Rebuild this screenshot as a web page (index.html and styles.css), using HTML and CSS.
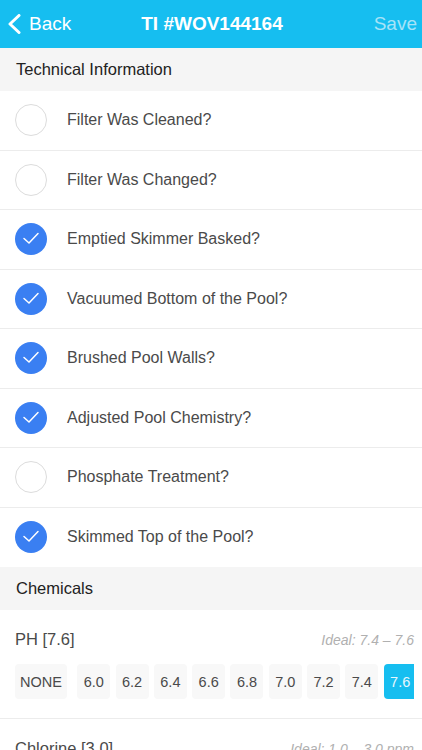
FILE: index.html
```html
<!DOCTYPE html>
<html>
  <head>
    <title>TI #WOV144164</title>
    <link rel="stylesheet" href="styles.css">
  </head>
  <body>
    <header class="nav">
      <a class="nav-back">
        <svg width="14" height="20" viewBox="0 0 14 20"><polyline points="12,1.5 3,10 12,18.5" fill="none" stroke="#fff" stroke-width="3" stroke-linecap="round" stroke-linejoin="round"/></svg>
        <span>Back</span>
      </a>
      <h1 class="nav-title">TI #WOV144164</h1>
      <a class="nav-save">Save</a>
    </header>

    <main>
      <div class="section-header">Technical Information</div>
      <ul class="checklist">
        <li class="check-row"><span class="check"></span>Filter Was Cleaned?</li>
        <li class="check-row"><span class="check"></span>Filter Was Changed?</li>
        <li class="check-row"><span class="check on"><svg width="32" height="32" viewBox="0 0 32 32"><polyline points="9,15.5 14,20 23,10.5" fill="none" stroke="#fff" stroke-width="1.5" stroke-linecap="round" stroke-linejoin="round"/></svg></span>Emptied Skimmer Basked?</li>
        <li class="check-row"><span class="check on"><svg width="32" height="32" viewBox="0 0 32 32"><polyline points="9,15.5 14,20 23,10.5" fill="none" stroke="#fff" stroke-width="1.5" stroke-linecap="round" stroke-linejoin="round"/></svg></span>Vacuumed Bottom of the Pool?</li>
        <li class="check-row"><span class="check on"><svg width="32" height="32" viewBox="0 0 32 32"><polyline points="9,15.5 14,20 23,10.5" fill="none" stroke="#fff" stroke-width="1.5" stroke-linecap="round" stroke-linejoin="round"/></svg></span>Brushed Pool Walls?</li>
        <li class="check-row"><span class="check on"><svg width="32" height="32" viewBox="0 0 32 32"><polyline points="9,15.5 14,20 23,10.5" fill="none" stroke="#fff" stroke-width="1.5" stroke-linecap="round" stroke-linejoin="round"/></svg></span>Adjusted Pool Chemistry?</li>
        <li class="check-row"><span class="check"></span>Phosphate Treatment?</li>
        <li class="check-row"><span class="check on"><svg width="32" height="32" viewBox="0 0 32 32"><polyline points="9,15.5 14,20 23,10.5" fill="none" stroke="#fff" stroke-width="1.5" stroke-linecap="round" stroke-linejoin="round"/></svg></span>Skimmed Top of the Pool?</li>
      </ul>

      <div class="section-header">Chemicals</div>
      <div class="chem">
        <div class="chem-top">
          <span class="chem-name">PH [7.6]</span>
          <span class="chem-ideal">Ideal: 7.4 – 7.6</span>
        </div>
        <div class="chem-values">
          <span class="val none">NONE</span>
          <span class="val">6.0</span>
          <span class="val">6.2</span>
          <span class="val">6.4</span>
          <span class="val">6.6</span>
          <span class="val">6.8</span>
          <span class="val">7.0</span>
          <span class="val">7.2</span>
          <span class="val">7.4</span>
          <span class="val selected">7.6</span>
        </div>
      </div>
      <div class="chem">
        <div class="chem-top">
          <span class="chem-name">Chlorine [3.0]</span>
          <span class="chem-ideal">Ideal: 1.0 – 3.0 ppm</span>
        </div>
        <div class="chem-values">
          <span class="val none">NONE</span>
          <span class="val">0.5</span>
          <span class="val">1.0</span>
          <span class="val">1.5</span>
          <span class="val">2.0</span>
          <span class="val">2.5</span>
          <span class="val selected">3.0</span>
        </div>
      </div>
    </main>
  </body>
</html>
```

FILE: styles.css
```css
* {
  box-sizing: border-box;
}
body {
  margin: 0;
  background-color: #fff;
  font-family: "Liberation Sans", Arial, sans-serif;
  color: #4a4a4a;
}
.nav {
  height: 48px;
  display: grid;
  grid-template-columns: 1fr auto 1fr;
  align-items: center;
  padding: 0 5px 0 7px;
  background-color: #16bef0;
  color: #fff;
}
.nav-back {
  display: flex;
  align-items: center;
  gap: 8px;
  font-size: 19px;
}
.nav-back svg {
  display: block;
}
.nav-title {
  margin: 0;
  font-size: 19px;
  font-weight: bold;
}
.nav-save {
  justify-self: end;
  font-size: 19px;
  color: #a6e3f8;
}
.section-header {
  height: 43px;
  display: flex;
  align-items: center;
  padding-left: 16px;
  background-color: #f5f5f5;
  color: #222;
  font-size: 16.5px;
}
.checklist {
  list-style: none;
  margin: 0;
  padding: 0;
}
.check-row {
  height: 59.5px;
  display: flex;
  align-items: center;
  gap: 20px;
  padding-left: 15px;
  border-bottom: 1px solid #ececec;
  font-size: 16px;
}
.check-row:last-child {
  border-bottom: none;
}
.check {
  width: 32px;
  height: 32px;
  flex-shrink: 0;
  border: 1px solid #dcdcdc;
  border-radius: 50%;
}
.check.on {
  border: none;
  background-color: #3a7ff2;
}
.check svg {
  display: block;
}
.chem {
  padding: 20px 8px 19px 15px;
  border-bottom: 1px solid #ececec;
}
.chem-top {
  height: 18px;
  display: flex;
  justify-content: space-between;
  align-items: baseline;
}
.chem-name {
  font-size: 16.5px;
  line-height: 18px;
}
.chem-ideal {
  font-size: 14px;
  font-style: italic;
  color: #b0b0b0;
}
.chem-values {
  display: flex;
  gap: 5.3px;
  margin-top: 16px;
  overflow: hidden;
}
.val {
  width: 33px;
  height: 35px;
  flex-shrink: 0;
  display: grid;
  place-items: center;
  border-radius: 4px;
  background-color: #f8f8f8;
  font-size: 14.5px;
  color: #4a4a4a;
}
.val.none {
  width: 52px;
  margin-right: 5px;
}
.val.selected {
  background-color: #16bef0;
  color: #e6f7fd;
}
```
